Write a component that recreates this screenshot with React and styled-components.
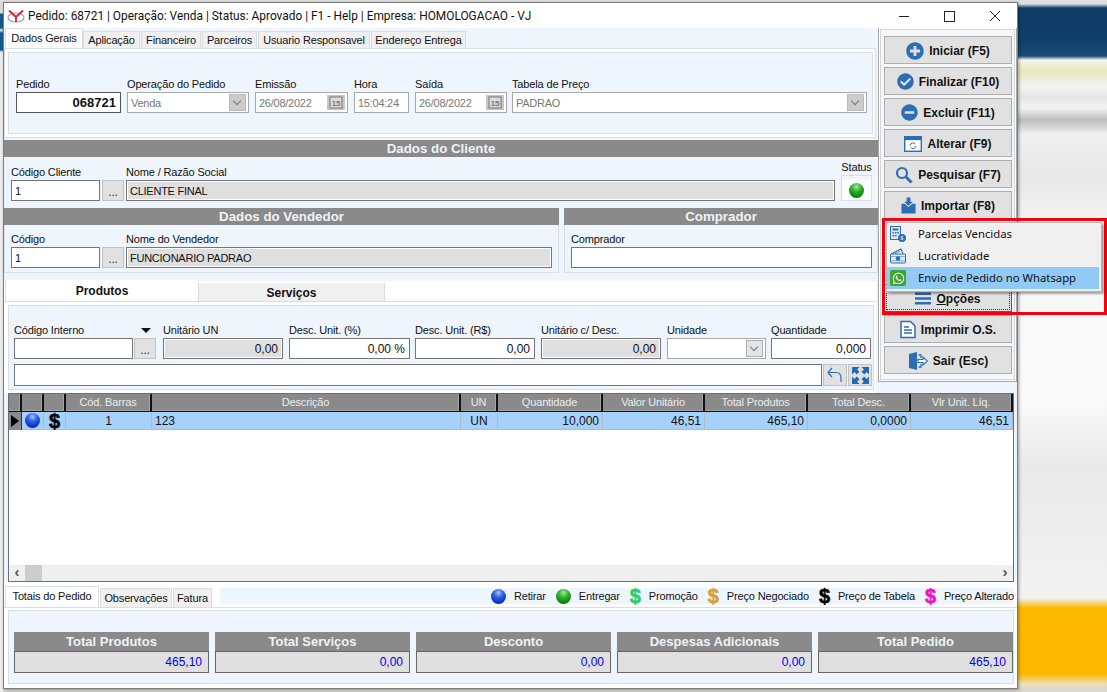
import React from "react";
import styled, { createGlobalStyle } from "styled-components";
import { FaPlusCircle, FaCheckCircle, FaMinusCircle, FaWhatsapp } from "react-icons/fa";

const GlobalStyle = createGlobalStyle`
  html, body {
    margin: 0;
    height: 692px;
    overflow: hidden;
  }
  body {
    font-family: "Liberation Sans", Arial, sans-serif;
    font-size: 11px;
    letter-spacing: -0.15px;
    color: #111;
    background:
      linear-gradient(180deg, #ddd 0, #ddd 13px, #1a5a8a 14px, #1a5a8a 28px, #eee 30px, #1a5a8a 33px, #1a5a8a 50px, #eee 52px) left top / 3px 100% no-repeat,
      linear-gradient(180deg, #e0e0e0 0, #d8dde2 4px, #0f3d68 8px, #0f3e6a 40px, #1b4a72 56px, #f4f4f2 60px, #e8eabc 70px, #e9ebc8 76px, #f3f3f3 86px, #e6e6e6 97px, #f3f3f3 108px, #bdbdbd 120px, #f0f0f0 134px, #e8e8e8 175px, #f7f7f7 240px, #fafafa 400px, #e9e9e9 470px, #f2f2f2 598px, #fdb900 608px, #fdb900 674px, #eadfb8 684px, #d6d6d6 692px);
  }
`;

const sections = { blue: "#eef5fc", gray: "#8a8a8a", line: "#d9dee3" };

export default function App() {
  return (
    <>
      <GlobalStyle />
      <Window>
        <TitleBar>
          <Logo viewBox="0 0 18 14">
            <ellipse cx="9" cy="8.5" rx="8" ry="4.5" fill="none" stroke="#7f9cc4" strokeWidth="1.1" />
            <path d="M2 1.5 L9 8 L9 13 M16 1.5 L9 8" fill="none" stroke="#d3262f" strokeWidth="1.8" />
          </Logo>
          <TitleText>Pedido: 68721 | Operação: Venda | Status: Aprovado | F1 - Help | Empresa: HOMOLOGACAO - VJ</TitleText>
          <WinControls>
            <WinButton viewBox="0 0 46 14"><path d="M20 7.5h10" stroke="#222" /></WinButton>
            <WinButton viewBox="0 0 46 14"><rect x="19.5" y="2.5" width="10" height="10" fill="none" stroke="#222" /></WinButton>
            <WinButton viewBox="0 0 46 14"><path d="M19 2l10 10M29 2l-10 10" stroke="#222" /></WinButton>
          </WinControls>
        </TitleBar>
        <Upper>
          <LeftCol>
            <TabStrip>
              {["Dados Gerais", "Aplicação", "Financeiro", "Parceiros", "Usuario Responsavel", "Endereço Entrega"].map((t, i) => (
                <Tab key={t} $active={i === 0} $w={[78, 57, 60, 55, 112, 95][i]}>{t}</Tab>
              ))}
            </TabStrip>
            <TabPage>
              <PageInner $h={82}>
                <FieldRow $top={23} $left={7}>
                  <Field label="Pedido" w={105}><Input $dark $right $bold>068721</Input></Field>
                  <Field label="Operação do Pedido" w={122}><Input $off>Venda<ComboArrow $off /></Input></Field>
                  <Field label="Emissão" w={93}><Input $off>26/08/2022<CalendarIcon /></Input></Field>
                  <Field label="Hora" w={55}><Input $off>15:04:24</Input></Field>
                  <Field label="Saída" w={92}><Input $off>26/08/2022<CalendarIcon /></Input></Field>
                  <Field label="Tabela de Preço" w={355} gap={5}><Input $off>PADRAO<ComboArrow $off /></Input></Field>
                </FieldRow>
              </PageInner>
            </TabPage>
            <SectionHeader>Dados do Cliente</SectionHeader>
            <ClientPanel>
              <Field label="Código Cliente" w={89}><Input>1</Input></Field>
              <DotsButton>...</DotsButton>
              <Field label="Nome / Razão Social" w={709} gap={2}><Input $gray>CLIENTE FINAL</Input></Field>
              <StatusField>
                <span>Status</span>
                <StatusBox><Ball $color="green" /></StatusBox>
              </StatusField>
            </ClientPanel>
            <SplitRow>
              <SplitCol $w={555}>
                <SectionHeader>Dados do Vendedor</SectionHeader>
                <SplitPanel>
                  <Field label="Código" w={89}><Input>1</Input></Field>
                  <DotsButton>...</DotsButton>
                  <Field label="Nome do Vendedor" w={426} gap={2}><Input $gray>FUNCIONARIO PADRAO</Input></Field>
                </SplitPanel>
              </SplitCol>
              <SplitCol $w={314}>
                <SectionHeader>Comprador</SectionHeader>
                <SplitPanel>
                  <Field label="Comprador" w={301}><Input /></Field>
                </SplitPanel>
              </SplitCol>
            </SplitRow>
            <ProductTabs>
              <ProductTab $active>Produtos</ProductTab>
              <ProductTab>Serviços</ProductTab>
            </ProductTabs>
            <ProductPage>
              <ProductInner>
                <FieldRow $top={16} $left={5}>
                  <Field label={<>Código Interno<DownMark /></>} w={119}><Input /></Field>
                  <DotsButton $tight>...</DotsButton>
                  <Field label="Unitário UN" w={120} gap={7}><Input $gray $right>0,00</Input></Field>
                  <Field label="Desc. Unit. (%)" w={121}><Input $right>0,00 %</Input></Field>
                  <Field label="Desc. Unit. (R$)" w={120} gap={5}><Input $right>0,00</Input></Field>
                  <Field label="Unitário c/ Desc." w={120}><Input $gray $right>0,00</Input></Field>
                  <Field label="Unidade" w={99}><Input $off><ComboArrow /></Input></Field>
                  <Field label="Quantidade" w={100} gap={5}><Input $right>0,000</Input></Field>
                </FieldRow>
                <SearchRow>
                  <SearchInput />
                  <SquareButton>
                    <svg viewBox="0 0 18 18" width="18" height="18"><path d="M6 2 L2 6.5 L6 11 M2.5 6.5 H10 C13.5 6.5 15 9 15 12 V16" fill="none" stroke="#2e6db4" strokeWidth="1.2" /></svg>
                  </SquareButton>
                  <SquareButton>
                    <svg viewBox="0 0 18 18" width="19" height="19"><path fill="#2268b2" d="M1 1h7L5.8 3.2 8 5.4 5.4 8 3.2 5.8 1 8zM17 1v7l-2.2-2.2L12.6 8 10 5.4l2.2-2.2L10 1zM1 17v-7l2.2 2.2L5.4 10 8 12.6l-2.2 2.2L8 17zM17 17h-7l2.2-2.2L10 12.6 12.6 10l2.2 2.2L17 10z" /></svg>
                  </SquareButton>
                </SearchRow>
              </ProductInner>
            </ProductPage>
          </LeftCol>
          <Sidebar>
            <SideButton><FaPlusCircle size={18} color="#2e6db4" />Iniciar (F5)</SideButton>
            <SideButton><FaCheckCircle size={17} color="#2e6db4" />Finalizar (F10)</SideButton>
            <SideButton><FaMinusCircle size={17} color="#2e6db4" />Excluir (F11)</SideButton>
            <SideButton>
              <svg viewBox="0 0 18 16" width="18" height="16"><rect x="0.7" y="0.7" width="16.6" height="14.6" fill="#fff" stroke="#2e6db4" strokeWidth="1.4" /><rect x="0.7" y="0.7" width="16.6" height="3.4" fill="#2e6db4" /><path d="M6 9.5a3 3 0 0 1 5.4-1.4M12 10a3 3 0 0 1-5.4 1.4" fill="none" stroke="#2e6db4" strokeWidth="1" /></svg>
              Alterar (F9)
            </SideButton>
            <SideButton>
              <svg viewBox="0 0 18 18" width="18" height="18"><circle cx="7" cy="7" r="5" fill="none" stroke="#2e6db4" strokeWidth="2.2" /><path d="M10.8 10.8 L16.5 16.5" stroke="#2e6db4" strokeWidth="3" /></svg>
              Pesquisar (F7)
            </SideButton>
            <SideButton>
              <svg viewBox="0 0 16 18" width="15" height="17"><path d="M0.5 7h3.5l4 3.5L12 7h3.5V17.5H0.5z" fill="#2e6db4" /><path d="M6 0.5h4V5h2.6L8 9.2 3.4 5H6z" fill="#2e6db4" /></svg>
              Importar (F8)
            </SideButton>
            <SideButton />
            <SideButton />
            <SideButton $focus>
              <svg viewBox="0 0 16 12" width="16" height="13"><path d="M0 0h16v2.6H0zM0 4.7h16v2.6H0zM0 9.4h16V12H0z" fill="#2e6db4" /></svg>
              <span><u>O</u>pções</span>
            </SideButton>
            <SideButton>
              <svg viewBox="0 0 16 18" width="16" height="19"><path d="M1 1h9.5L15 5.5V17H1z" fill="#fff" stroke="#2e6db4" strokeWidth="1.5" /><path d="M4 6.5h5M4 9.5h8M4 12.5h8" stroke="#2e6db4" strokeWidth="1.3" /></svg>
              Imprimir O.S.
            </SideButton>
            <SideButton>
              <svg viewBox="0 0 20 18" width="20" height="18"><path d="M1 2 L9 0 V18 L1 16z" fill="#2e6db4" /><path d="M10.5 3H13v3M13 12v3h-2.5" fill="none" stroke="#2e6db4" strokeWidth="1.3" /><path d="M10 7.5h5V5l4.5 4-4.5 4v-2.5h-5z" fill="#fff" stroke="#2e6db4" strokeWidth="1.1" /></svg>
              Sair (Esc)
            </SideButton>
            <RedFrame />
            <PopupMenu>
              <MenuItem>
                <svg viewBox="0 0 16 16" width="16" height="16"><rect x="0.5" y="0.5" width="10" height="13" fill="#dfe8f2" stroke="#2e6db4" /><path d="M2.5 2.5h6v2h-6zM2.5 6h1.6v1.6H2.5zM5 6h1.6v1.6H5zM7.4 6H9v1.6H7.4zM2.5 9h1.6v1.6H2.5zM5 9h1.6v1.6H5z" fill="#2e6db4" /><circle cx="12" cy="12" r="4" fill="#2e6db4" /><path d="M13.3 10.6h-2.1v1.4h1.7v1.4h-2.2" fill="none" stroke="#fff" strokeWidth="0.7" /></svg>
                <span>Parcelas Vencidas</span>
              </MenuItem>
              <MenuItem>
                <svg viewBox="0 0 16 16" width="16" height="16"><path d="M1 6 L11 1 L13 5.5" fill="none" stroke="#2e6db4" strokeWidth="1.1" /><path d="M4.5 5.5 L10 3" stroke="#7aa5d2" strokeWidth="1.1" /><rect x="0.5" y="6" width="15" height="9" rx="1" fill="#e4ecf5" stroke="#2e6db4" /><circle cx="8" cy="10.5" r="2.3" fill="#2e6db4" /><path d="M0.5 8.5h15M0.5 12.8h15" stroke="#2e6db4" strokeWidth="0.5" /></svg>
                <span>Lucratividade</span>
              </MenuItem>
              <MenuItem $active>
                <WhatsBadge><FaWhatsapp size={13} color="#fff" /></WhatsBadge>
                <span>Envio de Pedido no Whatsapp</span>
              </MenuItem>
            </PopupMenu>
          </Sidebar>
        </Upper>
        <Grid>
          <GridRow>
            {headers.map((h, i) => <HeadCell key={i} $w={columns[i]}>{h}</HeadCell>)}
          </GridRow>
          <GridRow>
            <Indicator $w={columns[0]}><Arrow /></Indicator>
            <DataCell $w={columns[1]} $align="center"><Ball $color="blue" /></DataCell>
            <DataCell $w={columns[2]} $align="center"><Dollar $color="#000">$</Dollar></DataCell>
            {["1", "123", "UN", "10,000", "46,51", "465,10", "0,0000", "46,51"].map((v, i) => (
              <DataCell key={i} $w={columns[i + 3]} $align={i === 0 || i === 2 ? "center" : i === 1 ? "flex-start" : "flex-end"}>{v}</DataCell>
            ))}
          </GridRow>
          <GridFill />
          <ScrollBar>
            <ScrollArrow>‹</ScrollArrow>
            <ScrollThumb />
            <GridFill />
            <ScrollArrow>›</ScrollArrow>
          </ScrollBar>
        </Grid>
        <BottomTabs>
          <BottomTab $active $w={94}>Totais do Pedido</BottomTab>
          <BottomTab $w={72}>Observações</BottomTab>
          <BottomTab $w={39}>Fatura</BottomTab>
          <Legend>
            <LegendItem><Ball $color="blue" />Retirar</LegendItem>
            <LegendItem><Ball $color="green" />Entregar</LegendItem>
            <LegendItem><Dollar $color="#2ecc71">$</Dollar>Promoção</LegendItem>
            <LegendItem><Dollar $color="#d4a23a">$</Dollar>Preço Negociado</LegendItem>
            <LegendItem><Dollar $color="#000">$</Dollar>Preço de Tabela</LegendItem>
            <LegendItem><Dollar $color="#f50fc0">$</Dollar>Preço Alterado</LegendItem>
          </Legend>
        </BottomTabs>
        <BottomPage>
          <TotalsBox>
            {[["Total Produtos", "465,10"], ["Total Serviços", "0,00"], ["Desconto", "0,00"], ["Despesas Adicionais", "0,00"], ["Total Pedido", "465,10"]].map(([label, value]) => (
              <TotalCard key={label}>
                <TotalHead>{label}</TotalHead>
                <TotalValue>{value}</TotalValue>
              </TotalCard>
            ))}
          </TotalsBox>
        </BottomPage>
      </Window>
    </>
  );
}

const columns = [13, 22, 22, 86, 309, 37, 105, 102, 103, 103, 102];
const headers = ["", "", "", "Cód. Barras", "Descrição", "UN", "Quantidade", "Valor Unitário", "Total Produtos", "Total Desc.", "Vlr Unit. Líq."];

function Field({ label, w, gap = 6, children }) {
  return (
    <FieldWrap $w={w} $gap={gap}>
      <FieldLabel>{label}</FieldLabel>
      {children}
    </FieldWrap>
  );
}

function CalendarIcon() {
  return (
    <CalSvg viewBox="0 0 18 15">
      <rect width="18" height="15" fill="#c6c6c6" />
      <rect x="3" y="2" width="12" height="11" fill="#dcdcdc" stroke="#777" />
      <text x="9" y="11" textAnchor="middle" fontSize="8" fontWeight="700" fill="#777">15</text>
    </CalSvg>
  );
}

const Window = styled.div`
  width: 1013px;
  height: 685px;
  margin: 2px 0 0 3px;
  border: 1px solid #7d7d7d;
  background: ${sections.blue};
  display: flex;
  flex-direction: column;
  box-shadow: 1px 1px 3px rgba(0, 0, 0, 0.35);
`;

const TitleBar = styled.div`
  height: 25px;
  background: #fff;
  display: flex;
  align-items: center;
  padding-left: 3px;
`;

const Logo = styled.svg`
  width: 18px;
  height: 14px;
  margin-right: 3px;
`;

const TitleText = styled.div`
  font-family: Roboto, sans-serif;
  font-size: 11.9px;
  letter-spacing: 0;
  color: #111;
  flex: 1;
  white-space: nowrap;
`;

const WinControls = styled.div`
  display: flex;
`;

const WinButton = styled.svg`
  width: 46px;
  height: 14px;
`;

const Upper = styled.div`
  height: 365px;
  display: flex;
  align-items: flex-start;
`;

const LeftCol = styled.div`
  width: 874px;
  height: 365px;
  flex: none;
`;

const TabStrip = styled.div`
  height: 20px;
  display: flex;
  align-items: flex-end;
  padding-left: 1px;
`;

const Tab = styled.div`
  width: ${(p) => p.$w}px;
  height: ${(p) => (p.$active ? 20 : 17)}px;
  margin-right: ${(p) => (p.$active ? 0 : 1)}px;
  padding-bottom: ${(p) => (p.$active ? 2 : 0)}px;
  background: ${(p) => (p.$active ? "#fff" : "#f0f0f0")};
  border: 1px solid ${sections.line};
  border-bottom: none;
  box-sizing: border-box;
  display: flex;
  align-items: center;
  justify-content: center;
  white-space: nowrap;
`;

const TabPage = styled.div`
  height: 90px;
  width: 872px;
  margin-bottom: 2px;
  box-sizing: border-box;
  background: #fff;
  border: 1px solid ${sections.line};
  padding: 3px 2px 3px 3px;
`;

const PageInner = styled.div`
  height: ${(p) => p.$h}px;
  box-sizing: border-box;
  background: ${sections.blue};
  border: 1px solid ${sections.line};
`;

const FieldRow = styled.div`
  display: flex;
  align-items: flex-end;
  padding: ${(p) => p.$top}px 0 0 ${(p) => p.$left}px;
`;

const FieldWrap = styled.div`
  width: ${(p) => p.$w}px;
  margin-left: ${(p) => p.$gap}px;
  flex: none;
  &:first-child {
    margin-left: 0;
  }
`;

const FieldLabel = styled.div`
  height: 16px;
  line-height: 16px;
  white-space: nowrap;
  display: flex;
  justify-content: space-between;
  align-items: flex-start;
`;

const Input = styled.div`
  height: 21px;
  box-sizing: border-box;
  background: ${(p) => (p.$gray ? "#dfdfdf" : "#fff")};
  border: 1px solid ${(p) => (p.$off ? "#a9a9a9" : p.$dark ? "#555" : "#767676")};
  box-shadow: ${(p) => (p.$gray ? "inset 0 0 0 1px #fff" : "none")};
  color: ${(p) => (p.$off ? "#777" : "#111")};
  font-weight: ${(p) => (p.$bold ? 700 : 400)};
  font-size: ${(p) => (p.$bold ? 13 : p.$right ? 12 : 11)}px;
  letter-spacing: ${(p) => (p.$right ? 0 : -0.25)}px;
  display: flex;
  align-items: center;
  justify-content: ${(p) => (p.$right ? "flex-end" : "flex-start")};
  padding: 0 ${(p) => (p.$right ? 4 : 3)}px;
  white-space: nowrap;
`;

const ComboArrow = styled.i`
  margin-left: auto;
  margin-right: -1px;
  width: 17px;
  height: 17px;
  flex: none;
  background: ${(p) => (p.$off ? "#ccc" : "#e4e4e4")};
  border: 1px solid ${(p) => (p.$off ? "#bbb" : "#adadad")};
  box-sizing: border-box;
  position: relative;
  &::after {
    content: "";
    position: absolute;
    left: 4px;
    top: 3px;
    width: 5px;
    height: 5px;
    border-right: 1px solid #777;
    border-bottom: 1px solid #777;
    transform: rotate(45deg);
  }
`;

const CalSvg = styled.svg`
  margin-left: auto;
  margin-right: -1px;
  width: 18px;
  height: 15px;
  flex: none;
`;

const SectionHeader = styled.div`
  height: 17px;
  background: ${sections.gray};
  color: #eef3f8;
  font-weight: 700;
  font-size: 13.3px;
  letter-spacing: 0;
  line-height: 17px;
  text-align: center;
`;

const ClientPanel = styled.div`
  height: 47px;
  display: flex;
  align-items: flex-end;
  padding: 0 0 3px 7px;
  box-sizing: border-box;
`;

const StatusField = styled.div`
  margin-left: 6px;
  width: 31px;
  display: flex;
  flex-direction: column;
  align-items: center;
  gap: 1px;
  span {
    line-height: 14px;
    white-space: nowrap;
  }
`;

const StatusBox = styled.div`
  width: 31px;
  height: 26px;
  box-sizing: border-box;
  border: 1px solid ${sections.line};
  background: linear-gradient(180deg, ${sections.blue} 0, ${sections.blue} 4px, #fff 4px);
  display: flex;
  align-items: center;
  justify-content: center;
  padding-top: 5px;
`;

const DotsButton = styled.div`
  width: 22px;
  height: 21px;
  margin-left: ${(p) => (p.$tight ? 1 : 2)}px;
  box-sizing: border-box;
  flex: none;
  background: #e1e1e1;
  border: 1px solid #c2c2c2;
  display: flex;
  align-items: flex-end;
  justify-content: center;
  padding-bottom: 2px;
  color: #333;
  font-size: 12px;
  line-height: 12px;
`;

const SplitRow = styled.div`
  display: flex;
  justify-content: space-between;
  margin-top: 4px;
  height: 73px;
`;

const SplitCol = styled.div`
  width: ${(p) => p.$w}px;
`;

const SplitPanel = styled.div`
  height: 48px;
  box-sizing: border-box;
  border: 1px solid ${sections.line};
  border-top: none;
  display: flex;
  align-items: flex-end;
  padding: 0 0 4px 6px;
`;

const ProductTabs = styled.div`
  height: 21px;
  display: flex;
  align-items: flex-end;
  width: 872px;
  padding-left: 1px;
  box-sizing: border-box;
  background: #fff;
  border-bottom: 1px solid ${sections.line};
`;

const ProductTab = styled.div`
  width: ${(p) => (p.$active ? 193 : 187)}px;
  height: ${(p) => (p.$active ? 21 : 18)}px;
  background: ${(p) => (p.$active ? "#fff" : "#f0f0f0")};
  border: 1px solid ${sections.line};
  border-width: ${(p) => (p.$active ? "0 0 0 1px" : "0 1px 0 1px")};
  box-sizing: border-box;
  font-weight: 700;
  font-size: 12px;
  letter-spacing: 0;
  display: flex;
  align-items: center;
  justify-content: center;
  padding: ${(p) => (p.$active ? "1px 0 0" : "2px 0 0")};
`;

const ProductPage = styled.div`
  width: 872px;
  height: 91px;
  box-sizing: border-box;
  background: #fff;
  padding: 3px 2px 3px 4px;
`;

const ProductInner = styled.div`
  height: 85px;
  box-sizing: border-box;
  background: ${sections.blue};
  border: 1px solid ${sections.line};
`;

const SearchRow = styled.div`
  display: flex;
  gap: 1px;
  margin: 5px 0 0 5px;
  align-items: stretch;
`;

const SearchInput = styled.div`
  width: 808px;
  height: 22px;
  box-sizing: border-box;
  background: #fff;
  border: 1px solid #767676;
`;

const SquareButton = styled.div`
  width: 24px;
  height: 22px;
  box-sizing: border-box;
  background: #e1e1e1;
  border: 1px solid #c2c2c2;
  display: flex;
  align-items: center;
  justify-content: center;
`;

const Sidebar = styled.div`
  width: 139px;
  height: 354px;
  flex: none;
  box-sizing: border-box;
  background: #f5f8fb;
  border: 1px solid #a8a8a8;
  border-top: none;
  box-shadow: inset 0 0 0 1px #fff, inset 0 0 0 2px #d5d5d5;
  padding: 8px 0 0 5px;
  position: relative;
  display: flex;
  flex-direction: column;
  gap: 3px;
`;

const SideButton = styled.div`
  width: 128px;
  height: 28px;
  flex: none;
  box-sizing: border-box;
  background: #e1e1e1;
  border: 1px solid ${(p) => (p.$focus ? "#0a6fc2" : "#adadad")};
  outline: ${(p) => (p.$focus ? "1px dotted #333" : "none")};
  outline-offset: -3px;
  display: flex;
  align-items: center;
  justify-content: center;
  gap: 5px;
  font-weight: 700;
  font-size: 12px;
  letter-spacing: 0;
  color: #111;
  white-space: nowrap;
  padding-top: 1px;
`;

const RedFrame = styled.div`
  position: absolute;
  left: 3px;
  top: 190px;
  width: 219px;
  height: 91px;
  border: 3px solid #f5000f;
  pointer-events: none;
`;

const PopupMenu = styled.div`
  position: absolute;
  left: 7px;
  top: 194px;
  width: 216px;
  height: 70px;
  box-sizing: border-box;
  padding: 0 2px 0 0;
  background: #f0f0f0;
  border: 1px solid #b5b5b5;
  box-shadow: 2px 2px 2px rgba(0, 0, 0, 0.35);
`;

const MenuItem = styled.div`
  height: 22px;
  display: flex;
  align-items: center;
  gap: 12px;
  padding-left: 3px;
  background: ${(p) => (p.$active ? "#91c9f7" : "transparent")};
  font-family: "Noto Sans", sans-serif;
  font-size: 11.3px;
  letter-spacing: 0;
  color: #111;
  span {
    padding-bottom: 1px;
  }
`;

const WhatsBadge = styled.i`
  width: 16px;
  height: 16px;
  border-radius: 2px;
  background: #3da52f;
  display: flex;
  align-items: center;
  justify-content: center;
`;

const Grid = styled.div`
  width: 1004px;
  height: 187px;
  margin-left: 4px;
  background: #fff;
  border: 1px solid #6e6e6e;
  display: flex;
  flex-direction: column;
`;

const GridRow = styled.div`
  display: flex;
  height: 18px;
  flex: none;
`;

const HeadCell = styled.div`
  width: ${(p) => p.$w}px;
  box-sizing: border-box;
  background: ${sections.gray};
  border-right: 2px solid #111;
  border-bottom: 1px solid #111;
  box-shadow: inset -1px -1px 0 #a3a3a3;
  color: #e9edf1;
  text-align: center;
  line-height: 17px;
  white-space: nowrap;
  overflow: hidden;
`;

const DataCell = styled.div`
  width: ${(p) => p.$w}px;
  box-sizing: border-box;
  background: #a6d1fb;
  border-right: 1px solid #b5b9bd;
  border-bottom: 1px solid #b5b9bd;
  display: flex;
  align-items: center;
  justify-content: ${(p) => p.$align};
  padding: 0 3px;
  font-size: 12px;
  letter-spacing: 0;
`;

const Indicator = styled.div`
  width: ${(p) => p.$w}px;
  box-sizing: border-box;
  background: ${sections.gray};
  border-right: 1px solid #333;
  display: flex;
  align-items: center;
  justify-content: center;
`;

const Arrow = styled.i`
  border-left: 8px solid #000;
  border-top: 6px solid transparent;
  border-bottom: 6px solid transparent;
`;

const GridFill = styled.div`
  flex: 1;
`;

const ScrollBar = styled.div`
  height: 16px;
  display: flex;
  background: #efefef;
`;

const ScrollArrow = styled.div`
  width: 16px;
  font-weight: 700;
  font-size: 15px;
  color: #555;
  line-height: 14px;
  text-align: center;
`;

const ScrollThumb = styled.div`
  width: 17px;
  background: #cdcdcd;
`;

const BottomTabs = styled.div`
  display: flex;
  align-items: flex-end;
  height: 25px;
  background: #fff;
  padding-left: 1px;
`;

const BottomTab = styled.div`
  width: ${(p) => p.$w}px;
  height: ${(p) => (p.$active ? 21 : 19)}px;
  margin-right: 1px;
  padding-bottom: ${(p) => (p.$active ? 3 : 0)}px;
  box-sizing: border-box;
  background: ${(p) => (p.$active ? "#fff" : "#f0f0f0")};
  border: 1px solid ${sections.line};
  border-bottom: none;
  display: flex;
  align-items: center;
  justify-content: center;
  white-space: nowrap;
`;

const Legend = styled.div`
  flex: 1;
  height: 16px;
  margin: 0 3px 3px 7px;
  background: ${sections.blue};
  display: flex;
  align-items: center;
  justify-content: flex-end;
  gap: 10px;
`;

const LegendItem = styled.div`
  display: flex;
  align-items: center;
  gap: 8px;
  white-space: nowrap;
`;

const Ball = styled.i`
  display: block;
  width: 15px;
  height: 15px;
  border-radius: 50%;
  background: ${(p) =>
    p.$color === "green"
      ? "radial-gradient(circle at 50% 25%, #a8e6a0 0, #2fb52f 35%, #067a06 80%)"
      : "radial-gradient(circle at 50% 25%, #a6c4f5 0, #2f62e0 35%, #0a22c8 80%)"};
`;

const Dollar = styled.b`
  font-family: "Liberation Sans", Arial, sans-serif;
  font-size: 20px;
  line-height: 16px;
  color: ${(p) => p.$color};
  -webkit-text-stroke: 0.6px ${(p) => p.$color};
`;

const BottomPage = styled.div`
  flex: 1;
  background: #fff;
  border-top: 1px solid ${sections.line};
  padding: 2px 3px 4px 4px;
  display: flex;
`;

const TotalsBox = styled.div`
  flex: 1;
  background: ${sections.blue};
  border: 1px solid ${sections.line};
  padding: 21px 0 0 5px;
  display: flex;
  gap: 6px;
`;

const TotalCard = styled.div`
  flex: 1;
  height: 41px;
`;

const TotalHead = styled.div`
  height: 19px;
  background: ${sections.gray};
  color: #eef3f8;
  font-weight: 700;
  font-size: 13px;
  letter-spacing: 0;
  line-height: 19px;
  text-align: center;
`;

const TotalValue = styled.div`
  height: 22px;
  box-sizing: border-box;
  background: #dfdfdf;
  border: 1px solid #666;
  color: #0000f0;
  font-size: 12px;
  letter-spacing: 0;
  text-align: right;
  padding-right: 6px;
  line-height: 20px;
`;

const DownMark = styled.i`
  margin: 6px -18px 0 0;
  border-top: 5px solid #111;
  border-left: 5px solid transparent;
  border-right: 5px solid transparent;
`;
